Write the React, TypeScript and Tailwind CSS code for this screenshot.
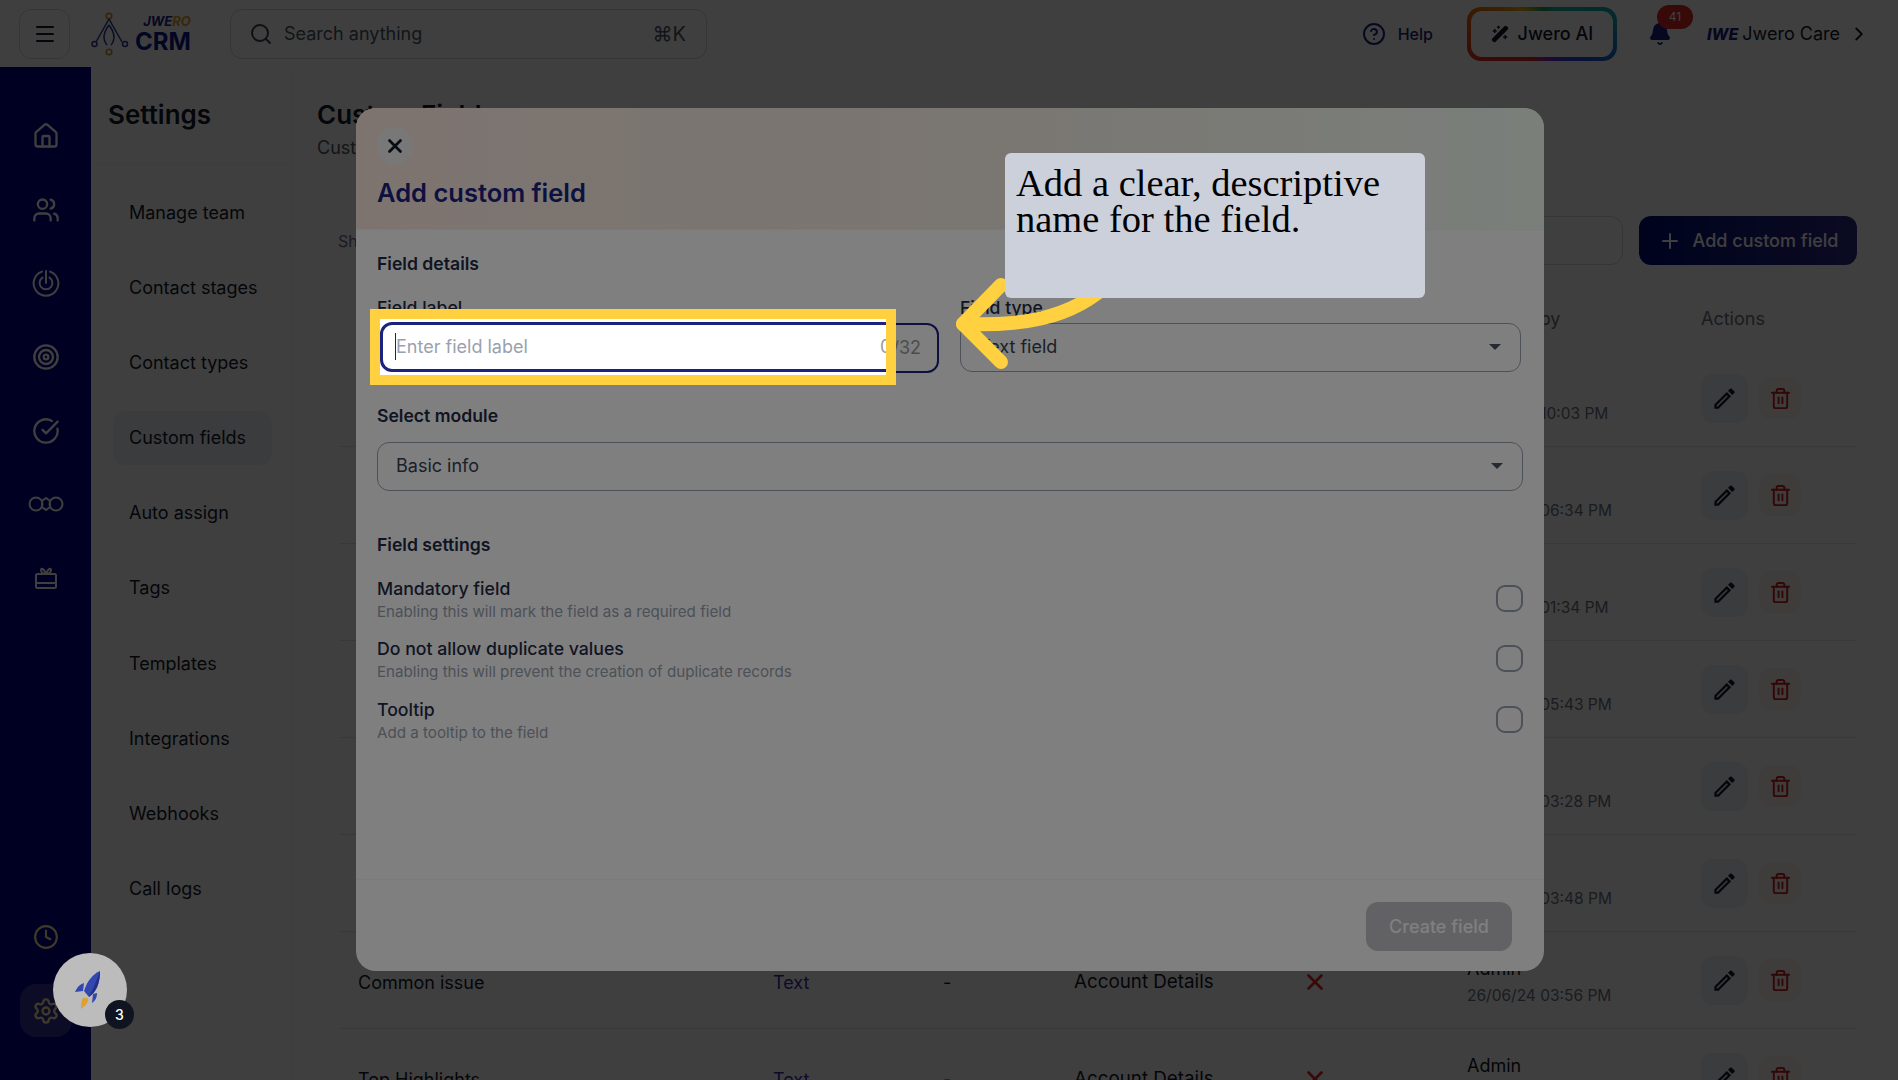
import React from 'react';
import { Bell, ChevronRight, CircleCheckBig, CircleHelp, Clock, Home, Menu, Plus, Search, Settings, Target, Trash2, Users, WandSparkles, X } from 'lucide-react';
import { MdOutlineEdit } from 'react-icons/md';

const navItems = ['Manage team', 'Contact stages', 'Contact types', 'Custom fields', 'Auto assign', 'Tags', 'Templates', 'Integrations', 'Webhooks', 'Call logs'];

const rows = [
  { name: '', type: '', module: '', by: 'Admin', date: '26/06/24 10:03 PM' },
  { name: '', type: '', module: '', by: 'Admin', date: '26/06/24 06:34 PM' },
  { name: '', type: '', module: '', by: 'Admin', date: '26/06/24 01:34 PM' },
  { name: '', type: '', module: '', by: 'Admin', date: '26/06/24 05:43 PM' },
  { name: '', type: '', module: '', by: 'Admin', date: '26/06/24 03:28 PM' },
  { name: '', type: '', module: '', by: 'Admin', date: '26/06/24 03:48 PM' },
  { name: 'Common issue', type: 'Text', module: 'Account Details', by: 'Admin', date: '26/06/24 03:56 PM' },
  { name: 'Top Highlights', type: 'Text', module: 'Account Details', by: 'Admin', date: '26/06/24 03:58 PM' },
];

const settingsRows = [
  { title: 'Mandatory field', hint: 'Enabling this will mark the field as a required field' },
  { title: 'Do not allow duplicate values', hint: 'Enabling this will prevent the creation of duplicate records' },
  { title: 'Tooltip', hint: 'Add a tooltip to the field' },
];

function RadarIcon() {
  return (
    <svg width="28" height="28" viewBox="0 0 28 28" fill="none" stroke="currentColor" strokeWidth="2" strokeLinecap="round">
      <path d="M10 2.6a12.4 12.4 0 1 0 8 0" />
      <path d="M10.5 8.6a6.4 6.4 0 1 0 7 0" />
      <path d="M14 2v12" />
    </svg>
  );
}

function ChainIcon() {
  return (
    <svg width="36" height="18" viewBox="0 0 36 18" fill="none" stroke="currentColor" strokeWidth="2">
      <circle cx="8" cy="9" r="6.5" />
      <circle cx="28" cy="9" r="6.5" />
      <path d="M18 3l4 3v6l-4 3-4-3V6z" />
    </svg>
  );
}

function GiftBoxIcon() {
  return (
    <svg width="24" height="24" viewBox="0 0 24 24" fill="none" stroke="currentColor" strokeWidth="2" strokeLinejoin="round">
      <rect x="2" y="8" width="20" height="14" rx="1.5" />
      <path d="M2 17h20" />
      <path d="M12 8C9 8 7 6 7 4c0-2 3-2 5 4zM12 8c3 0 5-2 5-4 0-2-3-2-5 4z" />
    </svg>
  );
}

function JweroLogo() {
  return (
    <div className="flex items-center gap-[6px]">
      <svg width="38" height="46" viewBox="0 0 38 46" fill="none" strokeWidth="1.5">
        <circle cx="18" cy="5" r="2.8" stroke="#c98a1c" />
        <circle cx="18" cy="41" r="2.8" stroke="#c98a1c" />
        <circle cx="3.5" cy="33" r="2.5" stroke="#2b3a9e" />
        <circle cx="34" cy="33" r="2.5" stroke="#2b3a9e" />
        <path d="M18 8 5 31M18 8l13 23M18 14c-6 8-7 14-2 20M18 14c6 8 7 14 2 20" stroke="#2b3a9e" />
      </svg>
      <div className="flex flex-col items-end gap-[3px] font-bold leading-none">
        <span className="text-[13px] leading-[14px] italic text-[#1a237e]">JWE<span className="text-[#e0a020]">RO</span></span>
        <span className="text-[24px] leading-[22px] text-[#0a1a8c]">CRM</span>
      </div>
    </div>
  );
}

function FieldCounter() {
  return <span className="text-[18px] text-[#9a9a9a]">0/32</span>;
}

function RocketIcon() {
  return (
    <svg width="32" height="40" viewBox="0 0 32 40">
      <path d="M9 28c4-1 6 0 5 3-1 3-4 6-7 8 0-4 0-8 2-11z" fill="#e0a030" />
      <path d="M26 1c-7 3-13 10-16 20l5 6c7-5 11-13 11-26z" fill="#3347b0" />
      <path d="M10 13C6 14 3 17 1 22l8-1zM19 24l-1 9c3-2 5-5 5-10z" fill="#3347b0" />
      <path d="M26 1c-3 8-6 16-11 26 7-5 11-13 11-26z" fill="#22308a" />
    </svg>
  );
}

export default function App() {
  return (
    <div className="relative h-screen w-full overflow-hidden bg-white font-['Inter','Noto_Sans',sans-serif] text-[#101828]">
      {/* Top bar */}
      <header className="flex h-[67px] items-center justify-between pl-[19px] pr-[28px]">
        <div className="flex items-center">
          <button className="flex h-[50px] w-[51px] items-center justify-center rounded-xl border border-gray-300">
            <Menu size={24} />
          </button>
          <div className="ml-[21px] w-[139px]"><JweroLogo /></div>
          <div className="flex h-[50px] w-[477px] items-center rounded-xl border border-gray-300 pl-[18px] pr-[20px]">
            <Search size={24} className="text-gray-700" />
            <span className="ml-[11px] flex-1 text-[18px] text-gray-600">Search anything</span>
            <span className="text-[20px] text-gray-600">⌘K</span>
          </div>
        </div>
        <div className="flex items-center">
          <CircleHelp size={24} className="text-[#1a237e]" />
          <span className="ml-[12px] text-[16px] font-medium text-[#1a237e]">Help</span>
          <div className="ml-[34px] h-[54px] w-[150px] rounded-[14px] bg-[conic-gradient(from_0deg,#1f9d55,#14b8a6,#0ea5b7,#1d4ed8,#6d28d9,#dc2626,#dc2626,#ea580c,#eab308,#1f9d55)] p-[4px]">
            <div className="flex h-full items-center justify-center gap-[9px] rounded-[11px] bg-white">
              <WandSparkles size={18} fill="currentColor" />
              <span className="text-[18px] font-medium">Jwero AI</span>
            </div>
          </div>
          <div className="relative ml-[24px] flex h-[46px] w-[38px] items-center justify-center">
            <Bell size={24} fill="#1a237e" className="text-[#1a237e]" />
            <span className="absolute -right-[14px] -top-[6px] flex h-[24px] w-[36px] items-center justify-center rounded-full bg-[#dc2626] text-[12px] text-white">41</span>
          </div>
          <div className="ml-[28px] flex items-center">
            <span className="text-[16px] font-extrabold italic text-[#1a237e]">IWE</span>
            <span className="ml-[4px] text-[18px]">Jwero Care</span>
            <ChevronRight size={22} className="ml-[8px]" />
          </div>
        </div>
      </header>

      <div className="flex h-[1013px]">
        {/* Icon rail */}
        <aside className="relative flex w-[91px] shrink-0 flex-col items-center bg-[#000088] pb-[43px] pt-[55px] text-white">
          <div className="flex flex-col items-center gap-[45.7px]">
            {[<Home size={28} />, <Users size={28} />, <RadarIcon />, <Target size={28} />, <CircleCheckBig size={28} />, <ChainIcon />, <GiftBoxIcon />].map((icon, i) => (
              <span key={i} className="flex h-[28px] items-center justify-center">{icon}</span>
            ))}
          </div>
          <div className="mt-auto flex flex-col items-center gap-[34px]">
            <Clock size={26} className="text-[#ffe6a8]" />
            <div className="flex h-[53px] w-[52px] items-center justify-center rounded-2xl bg-white/20">
              <Settings size={28} className="text-[#ffe6a8]" />
            </div>
          </div>
        </aside>

        {/* Settings nav */}
        <nav className="w-[202px] shrink-0 border-r border-gray-100">
          <div className="border-b border-gray-100 pb-[32px] pl-[17px] pt-[32px]">
            <h2 className="text-[26px] font-semibold leading-[32px]">Settings</h2>
          </div>
          <ul className="ml-[22px] mt-[21px] flex w-[159px] flex-col gap-[21.2px]">
            {navItems.map(item => (
              <li key={item} className={`flex h-[54px] items-center rounded-xl pl-[16px] text-[18px] ${item === 'Custom fields' ? 'bg-[#eef0f8]' : ''}`}>
                {item}
              </li>
            ))}
          </ul>
        </nav>

        {/* Custom fields table */}
        <main className="min-w-0 flex-1 pl-[24px] pr-[41px] pt-[32px]">
          <h1 className="text-[26px] font-semibold leading-[32px]">Custom Fields</h1>
          <p className="mt-[6px] text-[18px] leading-[22px] text-gray-600">Custom fields</p>
          <div className="mt-[57px] flex items-center gap-[16px] pl-[21px]">
            <span className="flex-1 text-[16px] text-gray-500">Show</span>
            <div className="h-[49px] w-[300px] rounded-xl border border-gray-300" />
            <button className="flex h-[49px] w-[218px] items-center justify-center gap-[11px] rounded-xl bg-gradient-to-r from-[#000a78] to-[#2b2a88] text-[18px] font-medium text-white">
              <Plus size={24} />Add custom field
            </button>
          </div>
          <div className="ml-[22px] mt-[29px] grid h-[48px] grid-cols-[415px_170px_131px_228px_165px_234px_1fr] items-center pl-[19px] text-[18px] text-gray-500">
            <span>Name</span><span>Type</span><span>Default</span><span>Module</span><span>Required</span><span>Created by</span><span>Actions</span>
          </div>
          <div className="ml-[22px] mt-[8px]">
            {rows.map((row, i) => (
              <div key={i} className="grid h-[97px] grid-cols-[415px_170px_131px_228px_165px_234px_1fr] items-center border-b border-gray-200 pl-[19px] pt-[4px] text-[18px]">
                <span>{row.name}</span>
                <span className="text-[#3730a3]">{row.type}</span>
                <span>{row.name ? '-' : ''}</span>
                <span className="text-[18.8px]">{row.module}</span>
                <span>{row.name ? <X size={26} className="text-[#dc2626]" strokeWidth={2.5} /> : null}</span>
                <div className="flex flex-col gap-[4px]">
                  <span className="leading-[24px]">{row.by}</span>
                  <span className="text-[15.5px] leading-[22px] text-gray-500">{row.date}</span>
                </div>
                <div className="-mt-[4px] flex items-center gap-[11px]">
                  <span className="flex h-[49px] w-[47px] items-center justify-center rounded-xl bg-[#eef0f8]"><MdOutlineEdit size={27} /></span>
                  <span className="flex h-[42px] w-[42px] items-center justify-center rounded-xl bg-[#fdf2f0]"><Trash2 size={23} className="text-[#c81e1e]" /></span>
                </div>
              </div>
            ))}
          </div>
        </main>
      </div>

      {/* Modal backdrop */}
      <div className="absolute inset-0 bg-black/50" />

      {/* Add custom field dialog */}
      <div className="absolute left-[356px] top-[108px] flex h-[863px] w-[1188px] flex-col overflow-hidden rounded-[20px] bg-white">
        <div className="h-[122px] shrink-0 border-b border-gray-100 bg-gradient-to-r from-[#fbe9e0] via-[#f4ece4] to-[#f4fff6] pl-[21px] pt-[19px]">
          <span className="flex h-[37px] w-[36px] items-center justify-center rounded-full bg-[#f0f0f0]"><X size={22} strokeWidth={3} /></span>
          <h3 className="mt-[11px] text-[25.5px] font-semibold leading-[36px] text-[#1a237e]">Add custom field</h3>
        </div>
        <div className="flex-1 px-[21px] pt-[22px]">
          <h4 className="text-[17.6px] font-semibold leading-[24px] text-[#1f2a44]">Field details</h4>
          <div className="mt-[20px] grid grid-cols-[562px_561px] gap-[21px]">
            <div>
              <label className="text-[17.6px] font-medium leading-[24px] text-[#1f2a44]">Field label</label>
              <div className="mt-[3px] flex h-[50px] items-center justify-between rounded-xl border-2 border-[#1a237e] px-[16px] pb-[2px]">
                <span className="text-[18px] text-gray-400">Enter field label</span>
                <FieldCounter />
              </div>
            </div>
            <div>
              <label className="text-[17.6px] font-medium leading-[24px] text-[#1f2a44]">Field type</label>
              <div className="mt-[3px] flex h-[49px] items-center justify-between rounded-xl border border-gray-400 pb-[2px] pl-[18px] pr-[19px] text-[18px] text-gray-700">
                Text field
                <span className="h-0 w-0 border-x-[6px] border-t-[6px] border-x-transparent border-t-gray-600" />
              </div>
            </div>
          </div>
          <h4 className="mt-[31px] text-[17.6px] font-semibold leading-[24px] text-[#1f2a44]">Select module</h4>
          <div className="mt-[14px] flex h-[49px] items-center justify-between rounded-xl border border-gray-400 pb-[2px] pl-[18px] pr-[19px] text-[18px] text-gray-700">
            Basic info
            <span className="h-0 w-0 border-x-[6px] border-t-[6px] border-x-transparent border-t-gray-600" />
          </div>
          <h4 className="mt-[42px] text-[17.6px] font-semibold leading-[24px] text-[#1f2a44]">Field settings</h4>
          <div className="mt-[18px] flex flex-col gap-[13.4px]">
            {settingsRows.map(item => (
              <div key={item.title} className="flex h-[47px] items-center justify-between">
                <div className="pt-[2px]">
                  <p className="text-[17.7px] font-medium leading-[24px] text-[#1f2a44]">{item.title}</p>
                  <p className="text-[15.15px] leading-[21px] text-gray-400">{item.hint}</p>
                </div>
                <span className="h-[27px] w-[27px] rounded-[9px] border-2 border-gray-400" />
              </div>
            ))}
          </div>
        </div>
        <div className="flex h-[92px] shrink-0 items-start justify-end border-t border-gray-100 pr-[32px] pt-[22px]">
          <button className="h-[49px] w-[146px] rounded-xl bg-[#c4c4c8] text-[18px] font-medium text-white">Create field</button>
        </div>
      </div>

      {/* Tutorial dim, with the highlighted input, arrow and callout on top */}
      <div className="absolute inset-0 bg-black/50 backdrop-blur-[0.5px]" />

      <svg className="absolute left-[950px] top-[270px]" width="180" height="100" viewBox="0 0 180 100" fill="none" stroke="#ffd040" strokeWidth="14" strokeLinecap="round" strokeLinejoin="round">
        <path d="M51 15 13 54 51 92" />
        <path d="M13 54c50 2 108-2 149-44" />
      </svg>

      <div className="absolute left-[370px] top-[309px] h-[76px] w-[526px] overflow-hidden border-[10px] border-[#ffd040] bg-white">
        <div className="mt-[3px] flex h-[50px] w-[559px] items-center justify-between rounded-xl border-[3px] border-[#1a237e] bg-white pb-[2px] pl-[12px] pr-[16px]">
          <span className="border-l border-gray-800 text-[18px] text-gray-400">Enter field label</span>
          <FieldCounter />
        </div>
      </div>

      <div className="absolute left-[1005px] top-[153px] h-[145px] w-[420px] rounded-[6px] bg-[#cbd0db] px-[11px] pt-[12px] font-['Liberation_Serif',serif] text-[38.5px] leading-[36px] text-black">
        Add a clear, descriptive name for the field.
      </div>

      {/* Onboarding launcher */}
      <div className="absolute left-[53px] top-[953px] flex h-[74px] w-[74px] items-center justify-center rounded-full bg-[#bcbcbc]">
        <RocketIcon />
        <span className="absolute -bottom-[2px] -right-[7px] flex h-[29px] w-[29px] items-center justify-center rounded-full bg-[#0f1420] text-[14px] font-medium text-white">3</span>
      </div>
    </div>
  );
}
